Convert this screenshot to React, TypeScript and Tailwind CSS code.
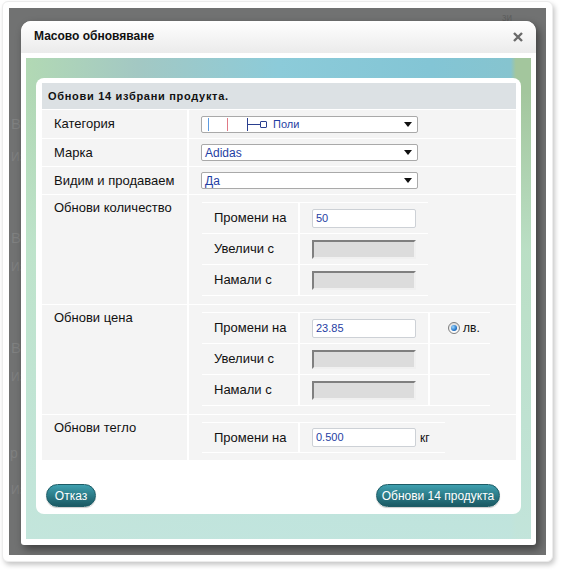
import React from 'react'

const BLUE = 'text-[#1f3ea3]'

function Select({ children }: { children: React.ReactNode }) {
  return (
    <div className="w-[217px] h-[17px] bg-white border border-[#a9a9a9] rounded-[2px] flex items-center pl-[3px] pr-[5px]">
      <div className={`flex-1 flex items-center text-[12px] leading-none ${BLUE}`}>{children}</div>
      <svg width="8" height="5" viewBox="0 0 8 5">
        <path d="M0 0H8L4 5Z" fill="#111" />
      </svg>
    </div>
  )
}

function TextInput({ value }: { value: string }) {
  return (
    <div className={`w-[104px] h-[19px] bg-white border border-[#cdd1d6] rounded-[2px] flex items-center pl-[3px] text-[11px] ${BLUE}`}>
      {value}
    </div>
  )
}

function DisabledInput() {
  return (
    <div className="w-[104px] h-[19px] bg-[#dcdcdc] border-2 border-t-[#7f7f7f] border-l-[#7f7f7f] border-r-[#f0f0f0] border-b-[#f0f0f0]" />
  )
}

function SubRow({ label, children, extra }: { label: string; children: React.ReactNode; extra?: React.ReactNode }) {
  return (
    <div className="flex gap-[2px] h-[30px]">
      <div className="w-[96px] bg-[#f4f4f4] flex items-center pl-[12px] text-[13px] text-[#111]">{label}</div>
      <div className="bg-[#f4f4f4] flex items-center pl-[12px] pr-[12px]">{children}</div>
      {extra}
    </div>
  )
}

function Row({ label, h, top, children }: { label: string; h: string; top?: boolean; children: React.ReactNode }) {
  return (
    <div className={`flex gap-[2px] ${h}`}>
      <div className={`w-[145px] bg-[#f4f4f4] pl-[12px] text-[13px] text-[#111] flex ${top ? 'items-start pt-[3px]' : 'items-center'}`}>
        {label}
      </div>
      <div className="flex-1 bg-[#f4f4f4]">{children}</div>
    </div>
  )
}

function Button({ label, w }: { label: string; w: string }) {
  return (
    <button className={`${w} h-[23px] rounded-full border border-[#1d5c66] bg-gradient-to-b from-[#3fa0af] to-[#1a5963] text-white text-[12px] flex items-center justify-center shadow-[0_1px_1px_rgba(0,0,0,0.2)]`}>
      {label}
    </button>
  )
}

export default function App() {
  return (
    <div className="w-[562px] h-[574px] bg-white font-['Liberation_Sans',Arial,sans-serif]">
      <div className="ml-[2px] pt-[1px]">
        <div className="w-[551px] h-[561px] p-[6px] bg-white rounded-[6px] border border-[#ececec] shadow-[2px_3px_5px_rgba(0,0,0,0.22)]">
          <div className="relative h-full bg-[#717272] pl-[12px] pt-[13px] overflow-hidden">
            {/* page behind the overlay */}
            <div className="absolute left-[2px] top-[108px] text-[15px] text-[#7f8080] leading-none">В</div>
            <div className="absolute left-[2px] top-[143px] text-[12px] text-[#7f8080] leading-none">Из</div>
            <div className="absolute left-[2px] top-[222px] text-[15px] text-[#7f8080] leading-none">В</div>
            <div className="absolute left-[2px] top-[253px] text-[12px] text-[#7f8080] leading-none">Из</div>
            <div className="absolute left-[2px] top-[332px] text-[15px] text-[#7f8080] leading-none">В</div>
            <div className="absolute left-[2px] top-[363px] text-[12px] text-[#7f8080] leading-none">Из</div>
            <div className="absolute left-[1px] top-[438px] text-[14px] text-[#7f8080] leading-none">р</div>
            <div className="absolute left-[2px] top-[476px] text-[12px] text-[#7f8080] leading-none">Из</div>
            <div className="absolute left-[493px] top-[5px] text-[10px] text-[#5f6060] leading-none">зи</div>

            {/* Modal */}
            <div className="relative w-[515px] h-[524px] bg-white rounded-t-[10px] rounded-b-[3px] shadow-[3px_4px_8px_rgba(0,0,0,0.45)] flex flex-col">
              <div className="h-[32px] rounded-t-[10px] bg-gradient-to-b from-white to-[#ebebeb] flex items-center justify-between pl-[13px] pr-[13px]">
                <span className="text-[12px] font-bold text-[#111] -mt-[2px]">Масово обновяване</span>
                <svg width="10" height="10" viewBox="0 0 10 10">
                  <path d="M1 1L9 9M9 1L1 9" stroke="#6a6a6a" strokeWidth="2.4" />
                </svg>
              </div>

              <div className="mx-[5px] mt-[5px] mb-[6px] flex-1 pt-[20px] px-[10px] pb-[25px] bg-[linear-gradient(180deg,rgba(198,232,222,0)_0%,rgba(198,232,222,0)_7%,rgba(194,231,210,0.75)_40%,rgba(196,230,222,0.95)_100%),linear-gradient(90deg,#b2d9b4_0%,#a3c8c3_22%,#8ccbd9_50%,#83c5d5_80%,#86c4cf_96%,#a3c69d_97%)]">
                <div className="h-full bg-white rounded-[8px] pl-[6px] pr-[5px] pt-[5px] flex flex-col">
                  {/* Table */}
                  <div className="flex flex-col gap-px bg-white">
                    <div className="h-[26px] bg-[#dce1e4] flex items-center pl-[6px] text-[11px] font-bold tracking-[0.7px] text-[#111]">
                      Обнови 14 избрани продукта.
                    </div>

                    <Row label="Категория" h="h-[28px]">
                      <div className="pl-[12px] pt-[6px]">
                        <Select>
                          <span className="inline-block w-px h-[13px] bg-[#5d9be0] ml-[3px]" />
                          <span className="inline-block w-px h-[13px] bg-[#e07a86] ml-[18px]" />
                          <span className="inline-block w-px h-[13px] bg-[#2a3f8f] ml-[19px]" />
                          <span className="inline-block w-[12px] h-px bg-[#2a3f8f]" />
                          <span className="inline-block w-[7px] h-[7px] border border-[#2a3f8f] rounded-[1px]" />
                          <span className="ml-[6px] text-[11px]">Поли</span>
                        </Select>
                      </div>
                    </Row>

                    <Row label="Марка" h="h-[27px]">
                      <div className="pl-[12px] pt-[5px]">
                        <Select>Adidas</Select>
                      </div>
                    </Row>

                    <Row label="Видим и продаваем" h="h-[27px]">
                      <div className="pl-[12px] pt-[5px]">
                        <Select>Да</Select>
                      </div>
                    </Row>

                    <Row label="Обнови количество" h="h-[109px]" top>
                      <div className="pl-[13px] pt-[7px]">
                        <div className="inline-flex flex-col gap-px py-px bg-white">
                          <SubRow label="Промени на"><TextInput value="50" /></SubRow>
                          <SubRow label="Увеличи с"><DisabledInput /></SubRow>
                          <SubRow label="Намали с"><DisabledInput /></SubRow>
                        </div>
                      </div>
                    </Row>

                    <Row label="Обнови цена" h="h-[109px]" top>
                      <div className="pl-[13px] pt-[7px]">
                        <div className="inline-flex flex-col gap-px py-px bg-white">
                          <SubRow
                            label="Промени на"
                            extra={
                              <div className="w-[60px] bg-[#f4f4f4] flex items-center pl-[18px] gap-[3px]">
                                <span className="w-[12px] h-[12px] rounded-full border border-[#7d7d7d] bg-gradient-to-b from-[#dcdcdc] to-white flex items-center justify-center">
                                  <span className="w-[6px] h-[6px] rounded-full bg-[radial-gradient(circle_at_35%_35%,#9ad6ff,#1667bd_70%)]" />
                                </span>
                                <span className="text-[12px] text-[#111]">лв.</span>
                              </div>
                            }
                          >
                            <TextInput value="23.85" />
                          </SubRow>
                          <SubRow label="Увеличи с" extra={<div className="w-[60px] bg-[#f4f4f4]" />}><DisabledInput /></SubRow>
                          <SubRow label="Намали с" extra={<div className="w-[60px] bg-[#f4f4f4]" />}><DisabledInput /></SubRow>
                        </div>
                      </div>
                    </Row>

                    <Row label="Обнови тегло" h="h-[45px]" top>
                      <div className="pl-[13px] pt-[7px]">
                        <div className="inline-flex flex-col gap-px py-px bg-white">
                          <div className="flex gap-[2px] h-[29px]">
                            <div className="w-[96px] bg-[#f4f4f4] flex items-center pl-[12px] text-[13px] text-[#111]">Промени на</div>
                            <div className="bg-[#f4f4f4] flex items-center pl-[12px] pr-[15px] gap-[4px]">
                              <TextInput value="0.500" />
                              <span className="text-[12px] text-[#111]">кг</span>
                            </div>
                          </div>
                        </div>
                      </div>
                    </Row>
                  </div>

                  {/* Footer */}
                  <div className="mt-[24px] ml-[4px] mr-[16px] flex justify-between">
                    <Button label="Отказ" w="w-[50px]" />
                    <Button label="Обнови 14 продукта" w="w-[124px]" />
                  </div>
                </div>
              </div>
            </div>
          </div>
        </div>
      </div>
    </div>
  )
}
